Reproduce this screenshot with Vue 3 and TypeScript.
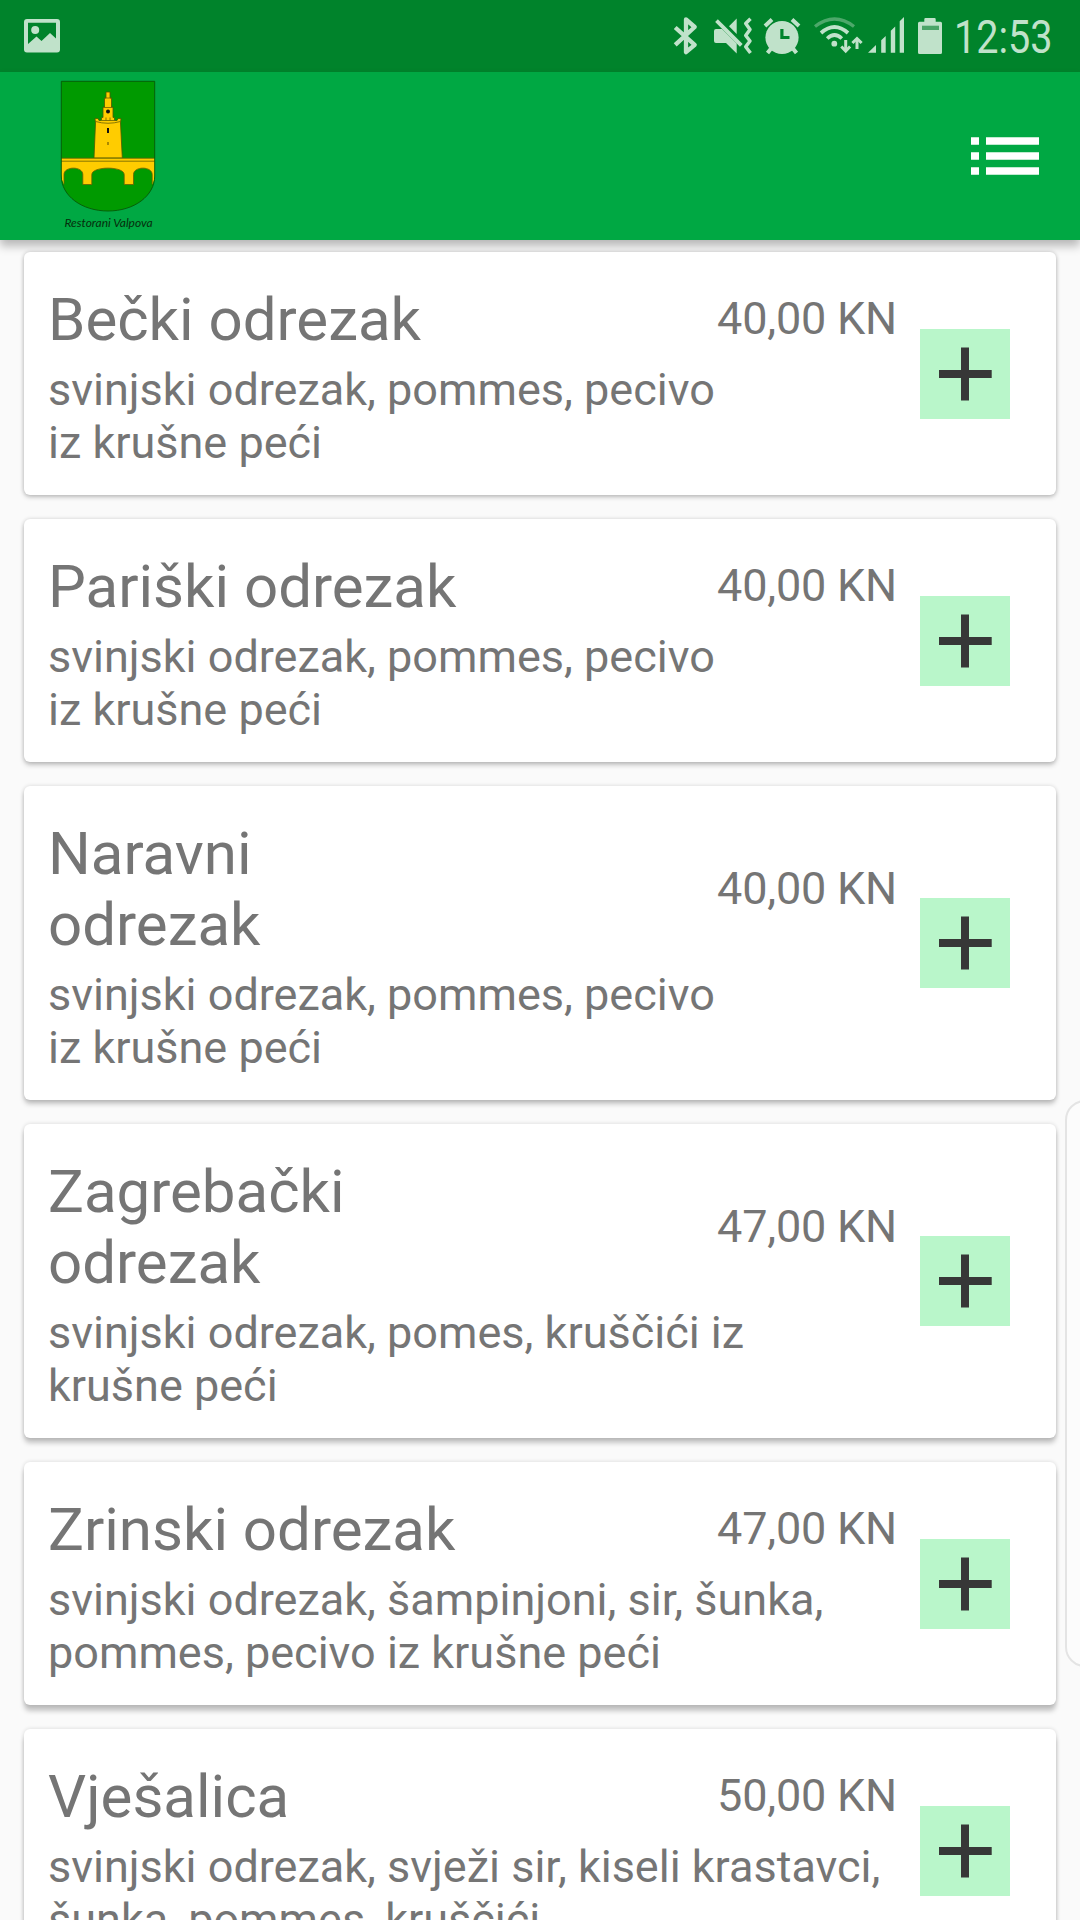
<script setup lang="ts">
interface Dish {
  name: string
  price: string
  description: string
  depth: number
}

// depth: how far the card's shadow drops, growing towards the bottom of the list
const dishes: Dish[] = [
  { name: 'Bečki odrezak', price: '40,00 KN', description: 'svinjski odrezak, pommes, pecivo\niz krušne peći', depth: 2 },
  { name: 'Pariški odrezak', price: '40,00 KN', description: 'svinjski odrezak, pommes, pecivo\niz krušne peći', depth: 3 },
  { name: 'Naravni odrezak', price: '40,00 KN', description: 'svinjski odrezak, pommes, pecivo\niz krušne peći', depth: 4 },
  { name: 'Zagrebački odrezak', price: '47,00 KN', description: 'svinjski odrezak, pomes, kruščići iz\nkrušne peći', depth: 5 },
  { name: 'Zrinski odrezak', price: '47,00 KN', description: 'svinjski odrezak, šampinjoni, sir, šunka,\npommes, pecivo iz krušne peći', depth: 6 },
  { name: 'Vješalica', price: '50,00 KN', description: 'svinjski odrezak, svježi sir, kiseli krastavci,\nšunka, pommes, kruščići', depth: 7 },
]

const cardShadow = (depth: number): string =>
  `0 ${depth}px 5px rgba(0,0,0,.22), 0 0 4px rgba(0,0,0,.14)`
</script>

<template>
  <div class="screen">
    <div class="status">
      <svg class="photo" width="36" height="34" viewBox="24 19 36 34">
        <path fill-rule="evenodd" d="M27 19H57Q60 19 60 22V49.5Q60 52.5 57 52.5H27Q24 52.5 24 49.500V22Q24 19 27 19ZM28 22.700V44L36.500 36.500L41.500 41L50 33L56 38.500V22.700Z" />
        <circle cx="35.200" cy="30" r="4" />
      </svg>
      <div class="indicators">
        <svg width="26" height="40" viewBox="673 16 26 40">
          <path class="line" stroke-width="4.300" stroke-linejoin="round" d="M675.200 27.500L694.700 44.800L686 52.200V19.500L694.700 27L675.200 44.800" />
        </svg>
        <svg class="mute" width="40" height="40" viewBox="713 16 40 40">
          <path d="M716 29H722L736.700 43.500V53.400L726 43H716Q714 43 714 41V31Q714 29 716 29ZM729 26.300L736.700 18.600V34Z" />
          <path class="line" stroke-width="3.800" d="M716.500 20.700L741.300 45.300" />
          <path class="line" stroke-width="3.500" stroke-linejoin="round" d="M750.500 18.800L745.700 23.500L750 29.500L745.700 35.500L750 41L745.700 46.700L750.500 53" />
        </svg>
        <svg class="alarm" width="38" height="40" viewBox="763 16 38 40">
          <circle cx="782" cy="37.500" r="16.600" />
          <path class="line" stroke-width="4" d="M765 26L772 19.500M792 19.500L799 26M771.500 48L767.500 53M792.500 48L796.500 53" />
          <path fill="none" stroke="#00832b" stroke-width="3.200" d="M781.900 29V37.500H789.500" />
        </svg>
        <svg class="wifi" width="50" height="40" viewBox="813 16 50 40">
          <path class="line" opacity=".4" stroke-width="3.300" d="M815 26.500Q834.500 11.500 854 26.500" />
          <path class="line" stroke-width="3.700" d="M821 33Q834.500 21 848 33M827.200 38.500Q834.500 31.500 841.800 38.500" />
          <circle cx="834.300" cy="43.700" r="2.900" />
          <path class="line" stroke-width="3" d="M845.700 40V50M857 39V49" />
          <path class="line" stroke-width="3" d="M841.300 46.500L845.700 51L850.100 46.500M852.400 43L857 38.500L861.600 43" />
        </svg>
        <svg class="signal" width="36" height="36" viewBox="868 17 36 36">
          <path d="M868 52.800L876 45V52.800ZM881.200 40.300L885.700 36V52.800H881.200ZM890.800 30.800L895.200 26.500V52.800H890.800ZM899.700 21.300L904 17V52.800H899.700Z" />
        </svg>
        <svg class="battery" width="24" height="36" viewBox="918 18 24 36">
          <path d="M925.500 18H934.500Q935.700 18 935.700 19.300V21.700H940.500Q942 21.700 942 23.200V52.500Q942 54 940.500 54H919.500Q918 54 918 52.500V23.200Q918 21.700 919.500 21.700H924.300V19.300Q924.300 18 925.500 18Z" />
          <path fill="#4ba468" d="M922 25.700H939V30H922Z" />
        </svg>
        <span class="clock">12:53</span>
      </div>
    </div>

    <header class="toolbar">
      <svg class="logo" width="108" height="152" viewBox="54 78 108 152">
        <path fill="#009a00" d="M61.300 81.300H154.700V176C154.700 196 134 211 108 211S61.300 196 61.300 176Z" />
        <path fill="#ffcc00" stroke="#4c5c00" stroke-width=".8" d="M94 158L95.500 123L95 118.500H98L99 120.500H101.500V117.500H103V107H104.500V98H106V92H110V98H111.500V107H113V117.500H114.500V120.500H117L118 118.500H121L120.500 123L122.300 158Z" />
        <path fill="none" stroke="#6b6200" stroke-width=".8" d="M95.500 121.500Q108 125 120.500 121.500M103 107.500H113M104.500 98H111.500M102 120.500H114.500M106 117.500V120.500M110 117.500V120.500" />
        <circle cx="108" cy="111.500" r="2" fill="#111" />
        <path fill="#111" d="M107 128H109V133H107Z" />
        <path fill="#886d00" d="M107.300 142H108.700V145H107.300Z" />
        <path fill="#ffcc00" d="M61.300 158.200H154.700V174Q154.700 181 152.200 184.500V174.500C152.200 166 133.500 166 133.500 174.500V184.500H124.200V174.500C124.200 166 91.800 166 91.800 174.500V184.500H82.800V174.500C82.800 166 64 166 64 174.500V184.500Q61.300 180 61.300 174Z" />
        <path fill="none" stroke="#685f00" stroke-width=".8" d="M61.300 158.200H154.700M61.300 161.200H154.700M64 184.500V174.500C64 166 82.800 166 82.800 174.500V184.500H91.800V174.500C91.800 166 124.200 166 124.200 174.500V184.500H133.500V174.500C133.500 166 152.200 166 152.200 174.500V184.500" />
        <path fill="none" stroke="#075807" stroke-width=".9" d="M61.300 81.300H154.700V176C154.700 196 134 211 108 211S61.300 196 61.300 176Z" />
        <text class="logo-text" x="64.500" y="226.500" textLength="88" lengthAdjust="spacingAndGlyphs">Restorani Valpova</text>
      </svg>
      <svg class="menu" width="68" height="38" viewBox="971 137 68 38">
        <path fill="#fff" d="M971 137.200H979V144.800H971ZM986 137.200H1039V144.800H986ZM971 152.200H979V159.800H971ZM986 152.200H1039V159.800H986ZM971 167.200H979V174.800H971ZM986 167.200H1039V174.800H986Z" />
      </svg>
    </header>

    <main class="list">
      <article v-for="dish in dishes" :key="dish.name" class="card" :style="{ boxShadow: cardShadow(dish.depth) }">
        <div class="info">
          <div class="heading">
            <h2>{{ dish.name }}</h2>
            <span class="price">{{ dish.price }}</span>
          </div>
          <p>{{ dish.description }}</p>
        </div>
        <button class="add" type="button" aria-label="Dodaj">
          <svg width="90" height="90" viewBox="0 0 90 90">
            <path fill="#373737" d="M41 18.500H49V41H71.700V49H49V71.500H41V49H19V41H41Z" />
          </svg>
        </button>
      </article>
    </main>
    <div class="edge-handle"></div>
  </div>
</template>

<style>
body {
  margin: 0;
  overflow: hidden;
}
</style>

<style scoped>
.screen {
  position: relative;
  width: 1080px;
  height: 1920px;
  overflow: hidden;
  background: #fafafa;
  color: #757575;
  font-family: Roboto, "Noto Sans", sans-serif;
}
.status {
  display: flex;
  justify-content: space-between;
  height: 72px;
  background: #00832b;
  color: #c0e2ca;
}
.status svg {
  flex: none;
  fill: #c0e2ca;
}
.status .line {
  fill: none;
  stroke: #c0e2ca;
}
.photo {
  margin: 19px 0 0 24px;
}
.indicators {
  display: flex;
  padding: 16px 26px 0 0;
}
.mute {
  margin-left: 14px;
}
.alarm {
  margin-left: 10px;
}
.wifi {
  margin-left: 12px;
}
.indicators .signal {
  margin: 1px 0 0 5px;
}
.indicators .battery {
  margin: 2px 0 0 14px;
}
.clock {
  width: 100px;
  margin-left: 12px;
  font-size: 46px;
  line-height: 42px;
  transform: scaleX(0.86);
  transform-origin: left;
}
.toolbar {
  display: flex;
  justify-content: space-between;
  height: 168px;
  background: #00a843;
  box-shadow: 0 6px 9px rgba(0, 0, 0, 0.27);
}
.logo {
  margin: 6px 0 0 54px;
}
.logo-text {
  fill: #062d0c;
  font-family: Lato, sans-serif;
  font-size: 11px;
  font-style: italic;
}
.menu {
  margin: 65px 41px 0 0;
}
.list {
  position: relative;
  display: flex;
  flex-direction: column;
  gap: 24px;
  padding: 12px 24px 0;
}
.card {
  display: flex;
  flex: none;
  align-items: center;
  box-sizing: border-box;
  padding: 32px 46px 26px 24px;
  border-radius: 6px;
  background: #fff;
}
.info {
  width: 849px;
}
.heading {
  display: flex;
  align-items: center;
  justify-content: space-between;
}
h2 {
  width: 422px;
  margin: 0;
  font-size: 60px;
  font-weight: 400;
  line-height: 71px;
}
.price {
  margin-bottom: 2px;
  font-size: 45px;
  letter-spacing: -0.2px;
  line-height: 53px;
}
p {
  margin: 8px 0 0;
  font-size: 45px;
  line-height: 53px;
  white-space: pre;
}
.add {
  flex: none;
  width: 90px;
  height: 90px;
  margin: 0 0 6px 23px;
  padding: 0;
  border: 0;
  background: #b9f6ca;
}
.add svg {
  display: block;
}
.edge-handle {
  position: absolute;
  top: 1100px;
  right: -20px;
  box-sizing: border-box;
  width: 35px;
  height: 567px;
  border: 2px solid #e4e4e4;
  border-radius: 20px 0 0 20px;
  background: #fcfcfc;
}
</style>
